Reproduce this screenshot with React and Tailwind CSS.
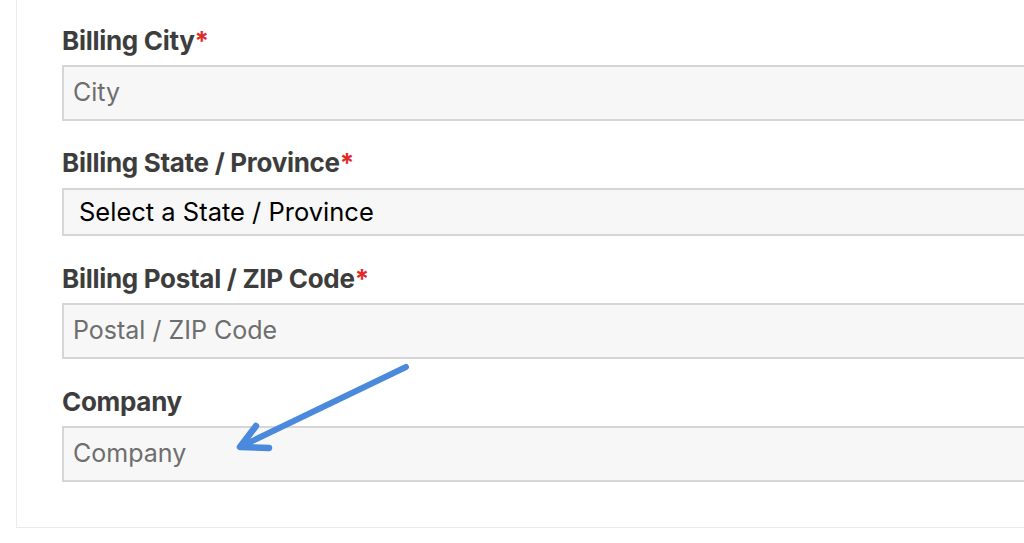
import React from "react";

const font = { fontFamily: "Inter, 'Liberation Sans', Arial, sans-serif" };

function Label({ text, required }) {
  return (
    <div className="text-[26px] leading-[30px] font-bold text-[#3d3d3d] tracking-[-0.3px]">
      {text}
      {required && <span className="text-[#e02b27]">*</span>}
    </div>
  );
}

function TextInput({ placeholder }) {
  return (
    <div className="mt-[9px] h-[56px] w-[1100px] border-2 border-[#d6d6d6] bg-[#f7f7f7] flex items-center pl-[9px] text-[25px] text-[#6e6e6e]">
      {placeholder}
    </div>
  );
}

export default function App() {
  return (
    <div className="relative w-[1024px] h-[543px] overflow-hidden bg-white" style={font}>
      <div className="ml-4 w-[1100px] border-l border-b border-[#ebebeb] pt-[26px] pl-[45px] pb-[45px]">
        <Label text="Billing City" required />
        <TextInput placeholder="City" />

        <div className="mt-[27px]">
          <Label text="Billing State / Province" required />
          <div className="mt-[10px] h-[48px] w-[1100px] border-2 border-[#d6d6d6] bg-[#f7f7f7] flex items-center pl-[15px] text-[25.5px] text-black">
            Select a State / Province
          </div>
        </div>

        <div className="mt-[28px]">
          <Label text="Billing Postal / ZIP Code" required />
          <TextInput placeholder="Postal / ZIP Code" />
        </div>

        <div className="mt-[28px]">
          <Label text="Company" />
          <TextInput placeholder="Company" />
        </div>
      </div>

      <svg className="absolute left-0 top-0 pointer-events-none" width="1024" height="543">
        <g stroke="#4a89dc" strokeLinecap="round" strokeLinejoin="round" fill="none">
          <line x1="406" y1="367" x2="244" y2="445" strokeWidth="6" />
          <path d="M256 426 L240 447 L269 448" strokeWidth="6.5" />
        </g>
      </svg>
    </div>
  );
}
